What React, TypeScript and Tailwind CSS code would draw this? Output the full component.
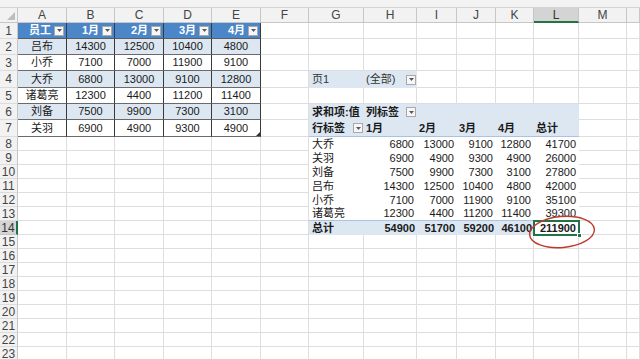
import React from 'react';

const COLS = ['', 'A', 'B', 'C', 'D', 'E', 'F', 'G', 'H', 'I', 'J', 'K', 'L', 'M', ''];
const NAMES = ['吕布', '小乔', '大乔', '诸葛亮', '刘备', '关羽'];
const VALS = [
  [14300, 12500, 10400, 4800],
  [7100, 7000, 11900, 9100],
  [6800, 13000, 9100, 12800],
  [12300, 4400, 11200, 11400],
  [7500, 9900, 7300, 3100],
  [6900, 4900, 9300, 4900],
];
const PIVOT: [string, number[]][] = [
  ['大乔', [6800, 13000, 9100, 12800, 41700]],
  ['关羽', [6900, 4900, 9300, 4900, 26000]],
  ['刘备', [7500, 9900, 7300, 3100, 27800]],
  ['吕布', [14300, 12500, 10400, 4800, 42000]],
  ['小乔', [7100, 7000, 11900, 9100, 35100]],
  ['诸葛亮', [12300, 4400, 11200, 11400, 39300]],
];
const TOTALS = [54900, 51700, 59200, 46100, 211900];
const MONTHS = ['1月', '2月', '3月', '4月'];
const PIV_HEAD = ['1月', '2月', '3月', '4月', '总计'];

function Dd() {
  return (
    <span className="w-[10px] h-[10px] shrink-0 bg-[#f7f7f7] border border-[#a9a9a9] flex items-center justify-center">
      <svg width="5" height="3" viewBox="0 0 5 3">
        <path d="M0 0H5L2.5 3Z" fill="#5a5a5a" />
      </svg>
    </span>
  );
}

function renderCell(r: number, c: number) {
  const key = `${r}-${c}`;
  // column headers
  if (r === 0) {
    if (c === 0)
      return (
        <div key={key} className="relative bg-[#f2f2f2] border-r border-b border-[#c6c6c6]">
          <span className="absolute right-[2px] bottom-[2px] w-0 h-0 border-l-[8px] border-l-transparent border-b-[8px] border-b-[#bdbdbd]" />
        </div>
      );
    if (c === 12)
      return (
        <div key={key} className="flex items-center justify-center bg-[#d4d4d4] border-r border-r-[#c6c6c6] border-b-2 border-b-[#217346] text-[12px] text-[#333]">
          L
        </div>
      );
    return (
      <div key={key} className="flex items-center justify-center bg-[#f2f2f2] border-r border-b border-[#c6c6c6] text-[12px] text-[#444]">
        {COLS[c]}
      </div>
    );
  }
  // row headers
  if (c === 0) {
    if (r === 14)
      return (
        <div key={key} className="flex items-center justify-center bg-[#d4d4d4] border-b border-b-[#c6c6c6] border-r-2 border-r-[#217346] text-[12px] text-[#333] leading-none">
          {r}
        </div>
      );
    return (
      <div key={key} className="flex items-center justify-center bg-[#f2f2f2] border-r border-r-[#c6c6c6] border-b border-b-[#dcdcdc] text-[12px] text-[#444] leading-none">
        {r}
      </div>
    );
  }
  // left table header
  if (r === 1 && c >= 1 && c <= 5) {
    const label = c === 1 ? '员工' : MONTHS[c - 2];
    return (
      <div key={key} className="flex items-center justify-end gap-[3px] pr-[2px] bg-[#4a86c8] border-r border-b border-r-[#3a3a3a] border-b-[#5d5d5d] text-white font-bold text-[11px] leading-none">
        <span>{label}</span>
        <Dd />
      </div>
    );
  }
  // left table body
  if (r >= 2 && r <= 7 && c >= 1 && c <= 5) {
    const i = r - 2;
    const text = c === 1 ? NAMES[i] : String(VALS[i][c - 2]);
    const band = r % 2 === 0;
    return (
      <div
        key={key}
        className={
          band
            ? 'relative flex items-center justify-center bg-[#dde7f2] border-r border-b border-r-[#3a3a3a] border-b-[#6a6a6a] text-[11px] text-[#1a1a1a] leading-none'
            : 'relative flex items-center justify-center bg-white border-r border-b border-r-[#3a3a3a] border-b-[#6a6a6a] text-[11px] text-[#1a1a1a] leading-none'
        }
      >
        {text}
        {r === 7 && c === 5 && (
          <span className="absolute right-0 bottom-0 w-0 h-0 border-l-[4px] border-l-transparent border-b-[4px] border-b-[#333]" />
        )}
      </div>
    );
  }
  // pivot page filter row
  if (r === 4 && c === 7)
    return (
      <div key={key} className="flex items-center pl-[3px] bg-[#dde7f2] text-[11px] text-[#333] leading-none">
        页1
      </div>
    );
  if (r === 4 && c === 8)
    return (
      <div key={key} className="flex items-center justify-between pl-[2px] pr-[1px] bg-[#dde7f2] text-[11px] text-[#333] leading-none">
        <span>(全部)</span>
        <Dd />
      </div>
    );
  // pivot header row 6
  if (r === 6 && c >= 7 && c <= 12) {
    if (c === 7)
      return (
        <div key={key} className="flex items-center pl-[3px] bg-[#dde7f2] font-bold text-[11px] text-[#1a1a1a] leading-none whitespace-nowrap">
          求和项:值
        </div>
      );
    if (c === 8)
      return (
        <div key={key} className="flex items-center justify-between pl-[2px] pr-[1px] bg-[#dde7f2] font-bold text-[11px] text-[#1a1a1a] leading-none">
          <span>列标签</span>
          <Dd />
        </div>
      );
    return <div key={key} className="bg-[#dde7f2]" />;
  }
  // pivot header row 7
  if (r === 7 && c >= 7 && c <= 12) {
    if (c === 7)
      return (
        <div key={key} className="flex items-center justify-between pl-[3px] pr-[1px] bg-[#dde7f2] border-b border-b-[#a8c3e3] font-bold text-[11px] text-[#1a1a1a] leading-none">
          <span>行标签</span>
          <Dd />
        </div>
      );
    return (
      <div key={key} className="flex items-center pl-[2px] bg-[#dde7f2] border-b border-b-[#a8c3e3] font-bold text-[11px] text-[#1a1a1a] leading-none">
        {PIV_HEAD[c - 8]}
      </div>
    );
  }
  // pivot body
  if (r >= 8 && r <= 13 && c >= 7 && c <= 12) {
    const [name, nums] = PIVOT[r - 8];
    const last = r === 13;
    if (c === 7)
      return (
        <div
          key={key}
          className={
            last
              ? 'flex items-center pl-[3px] bg-white border-b border-b-[#a8c3e3] text-[11px] text-[#1a1a1a] leading-none'
              : 'flex items-center pl-[3px] bg-white text-[11px] text-[#1a1a1a] leading-none'
          }
        >
          {name}
        </div>
      );
    return (
      <div
        key={key}
        className={
          last
            ? 'flex items-center justify-end pr-[3px] bg-white border-b border-b-[#a8c3e3] text-[11px] text-[#1a1a1a] leading-none'
            : 'flex items-center justify-end pr-[3px] bg-white text-[11px] text-[#1a1a1a] leading-none'
        }
      >
        {nums[c - 8]}
      </div>
    );
  }
  // pivot total row
  if (r === 14 && c >= 7 && c <= 12) {
    if (c === 7)
      return (
        <div key={key} className="flex items-center pl-[3px] bg-[#dde7f2] font-bold text-[11px] text-[#1a1a1a] leading-none">
          总计
        </div>
      );
    if (c === 12)
      return (
        <div key={key} className="relative flex items-center justify-end pr-[3px] bg-white font-bold text-[11px] text-[#1a1a1a] leading-none">
          {TOTALS[4]}
          <span className="absolute -left-[1px] -top-[1px] -right-[1px] -bottom-[1px] border-2 border-[#217346]" />
          <span className="absolute -right-[3px] -bottom-[3px] w-[5px] h-[5px] bg-[#217346] border border-white" />
        </div>
      );
    return (
      <div key={key} className="flex items-center justify-end pr-[2px] bg-[#dde7f2] font-bold text-[11px] text-[#1a1a1a] leading-none">
        {TOTALS[c - 8]}
      </div>
    );
  }
  // blank cell with gridlines
  return <div key={key} className="border-r border-b border-[#dedede]" />;
}

export default function App() {
  const cells: React.ReactNode[] = [];
  for (let r = 0; r <= 24; r++) {
    for (let c = 0; c < 15; c++) {
      cells.push(renderCell(r, c));
    }
  }
  return (
    <div className="w-[640px] h-[359px] overflow-hidden bg-white font-['Liberation_Sans','Noto_Sans_CJK_SC',sans-serif]">
      <div className="h-[8px] bg-[#f3f3f3] border-b border-[#d4d4d4]" />
      <div className="relative grid grid-cols-[18px_49px_48px_49px_48px_49px_48px_55px_53px_40px_39px_38px_45px_48px_13px] grid-rows-[15px_16px_16px_16px_17px_16px_16px_17px_repeat(17,14px)]">
        {cells}
        <svg className="absolute left-[526px] top-[204px] pointer-events-none" width="72" height="40" viewBox="0 0 72 40">
          <ellipse cx="36" cy="20" rx="32.5" ry="15.5" fill="none" stroke="#c0392f" strokeWidth="1.4" transform="rotate(-5 36 20)" />
        </svg>
      </div>
    </div>
  );
}
